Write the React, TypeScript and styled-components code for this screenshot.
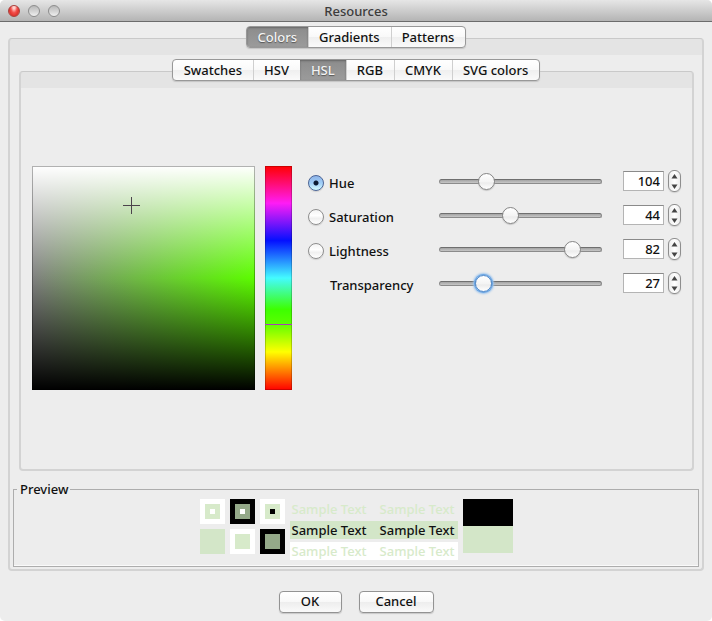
import React, { useState } from "react";
import styled, { createGlobalStyle, css } from "styled-components";

const GlobalStyle = createGlobalStyle`
  *, *::before, *::after { box-sizing: border-box; }
  body {
    margin: 0;
    background: #fff;
    color: #111;
    font: 500 13px/16px "Lucida Grande", "Noto Sans", "Open Sans", sans-serif;
  }
  button, input { font: inherit; color: inherit; margin: 0; }
`;

const Window = styled.div`
  background: #ededed;
  border-radius: 5px;
  overflow: hidden;
`;

const TitleBar = styled.header`
  display: grid;
  grid-template-columns: 1fr auto 1fr;
  align-items: center;
  height: 22px;
  padding: 0 8px;
  background: linear-gradient(#e6e6e6, #b4b4b4);
  border-bottom: 1px solid #6c6c6c;
`;

const Title = styled.h1`
  margin: 0;
  font-size: 13px;
  font-weight: 500;
  line-height: 20px;
  color: #3c3c3c;
`;

const WindowButtons = styled.div`
  display: flex;
  gap: 8px;
`;

const WindowButton = styled.button<{ $red?: boolean }>`
  width: 12px;
  height: 12px;
  padding: 0;
  border-radius: 50%;
  border: 1px solid ${(p) => (p.$red ? "#a8403c" : "#8c8c8c")};
  background: ${(p) =>
    p.$red
      ? "radial-gradient(ellipse at 50% 10%, #ffd0cc 0 15%, #f2504c 45%, #e0342f 70%, #ff8a80)"
      : "linear-gradient(#b8b8b8, #d8d8d8 60%, #f0f0f0)"};
`;

const Content = styled.main`
  padding: 4px 8px 8px;
`;

const TabList = styled.div`
  position: relative;
  z-index: 1;
  display: flex;
  width: max-content;
  height: 22px;
  margin: 0 auto -10px;
  border: 1px solid #989898;
  border-radius: 4px;
  background: linear-gradient(#fff, #f9f9f9 50%, #efefef 51%, #fafafa);
  box-shadow: 0 1px 1px #c4c4c4;
  overflow: hidden;
`;

const Tab = styled.button`
  display: flex;
  align-items: center;
  padding: 0 11px 1px;
  border: 0;
  background: none;

  & + & {
    box-shadow: inset 1px 0 #cfcfcf;
  }

  &[aria-selected="true"] {
    color: #f4f4f4;
    text-shadow: 0 1px 1px #555;
    background: linear-gradient(#8c8c8c, #9b9b9b);
    box-shadow: inset 0 1px 2px #666;
  }
`;

const Panel = styled.section`
  border: 2px solid #d3d3d3;
  border-top-color: #c9c9c9;
  border-top-width: 1px;
  border-radius: 4px;
  background: linear-gradient(#e4e4e4 0 16px, #ededed 16px);
`;

const OuterPanel = styled(Panel)`
  padding: 20px 3px 2px;
`;

const InnerPanel = styled(Panel)`
  margin: 0 5px 0 6px;
`;

const Picker = styled.div`
  display: flex;
  align-items: flex-start;
  padding: 94px 10px 79px 11px;
`;

const ColorField = styled.div`
  position: relative;
  flex: none;
  width: 223px;
  height: 224px;
  border: 1px solid rgba(0, 0, 0, 0.3);
  background: linear-gradient(#fff, rgba(255, 255, 255, 0) 50%, rgba(0, 0, 0, 0) 50%, #000),
    linear-gradient(90deg, #808080, #5cfc00);
  background-origin: border-box;
`;

const Crosshair = styled.svg`
  position: absolute;
  width: 17px;
  height: 17px;
  margin: -10px 0 0 -7px;
`;

const HueBar = styled.div`
  position: relative;
  flex: none;
  width: 27px;
  height: 224px;
  margin: 0 16px 0 10px;
  border: 1px solid rgba(0, 0, 0, 0.2);
  background: linear-gradient(
    #ff0000, #ff1cf5 16.6%, #0410ff 33.3%, #44fbff 50%,
    #3dff00 64%, #58ff00 70%, #ffff00 83%, #ff0000
  );
  background-origin: border-box;
`;

const HueMarker = styled.div`
  position: absolute;
  left: -1px;
  right: -1px;
  height: 1px;
  margin-top: -1px;
  background: #a83fb8;
`;

const Controls = styled.div`
  flex: 1;
  display: grid;
  gap: 4px;
`;

const ControlRow = styled.div`
  display: grid;
  grid-template-columns: 123px 1fr 41px 18px;
  align-items: center;
  height: 30px;
`;

const ChannelLabel = styled.label<{ $plain?: boolean }>`
  display: flex;
  align-items: center;
  gap: 5px;
  padding: 3px 0 0 ${(p) => (p.$plain ? 22 : 0)}px;
`;

const Radio = styled.input`
  appearance: none;
  width: 16px;
  height: 16px;
  border: 1px solid #8e8e8e;
  border-radius: 50%;
  background: linear-gradient(#f4f4f4, #fff 40%, #f0f0f0 60%, #fff);
  box-shadow: 0 1px 1px #d0d0d0;

  &:checked {
    border-color: #4b6496;
    background: radial-gradient(circle, #0b1a33 0 2px, transparent 3px),
      linear-gradient(#8fb4e8, #9fcdf7 50%, #d4fbff);
  }
`;

const SliderBox = styled.div`
  display: grid;
  align-items: center;
  margin-right: 13px;
`;

const SliderTrack = styled.div`
  grid-area: 1 / 1;
  height: 5px;
  margin: 0 8px;
  border: 1px solid #8b8b8b;
  border-top-color: #6f6f6f;
  border-radius: 3px;
  background: linear-gradient(#a4a4a4, #c6c6c6);
`;

const focusRing = css`
  border-color: #4c88cc;
  box-shadow: 0 0 0 1px #69a4e2, 0 0 2px 2px #9cc4ee;
`;

const SliderInput = styled.input<{ $active?: boolean }>`
  grid-area: 1 / 1;
  appearance: none;
  position: relative;
  width: 100%;
  min-width: 0;
  height: 20px;
  background: none;
  outline: none;

  &::-webkit-slider-thumb {
    appearance: none;
    width: 17px;
    height: 17px;
    border: 1px solid #858585;
    border-radius: 50%;
    background: linear-gradient(#fff, #f4f4f4 50%, #ececec 60%, #fff);
    box-shadow: 0 1px 1px #c4c4c4;
    ${(p) => p.$active && focusRing}
  }
`;

const NumberField = styled.input`
  width: 100%;
  height: 20px;
  padding: 0 3px;
  border: 1px solid #b4b4b4;
  border-top-color: #8a8a8a;
  border-radius: 0;
  background: #fff;
  text-align: right;
  outline: none;
`;

const Stepper = styled.div`
  display: grid;
  height: 22px;
  margin-left: 4px;
  width: 13px;
  border: 1px solid #8e8e8e;
  border-radius: 6px;
  background: linear-gradient(90deg, #ececec, #fff 50%, #ececec);
  box-shadow: 0 1px 1px #d0d0d0;
`;

const StepButton = styled.button`
  display: grid;
  place-items: center;
  min-height: 0;
  padding: 0;
  border: 0;
  background: none;
`;

const Preview = styled.fieldset`
  display: flex;
  justify-content: center;
  gap: 5px;
  min-width: 0;
  margin: 10px 0 0;
  padding: 2px 3px 6px;
  border: 1px solid #adadad;
  box-shadow: inset 0 -1px #fafafa;
`;

const PreviewLegend = styled.legend`
  padding: 0 2px 0 3px;
  line-height: 16px;
`;

const SwatchGrid = styled.div`
  display: grid;
  grid-template-columns: repeat(3, 25px);
  grid-auto-rows: 25px;
  gap: 5px;
`;

const Swatch = styled.div<{ $outer: string; $inner?: string }>`
  display: grid;
  place-items: center;
  background: ${(p) => p.$outer};

  &::before {
    content: "";
    grid-area: 1 / 1;
    width: 15px;
    height: 15px;
    background: ${(p) => p.$inner ?? "none"};
  }
`;

const SwatchCore = styled.div<{ $color: string }>`
  grid-area: 1 / 1;
  width: 5px;
  height: 5px;
  background: ${(p) => p.$color};
`;

const Samples = styled.div`
  display: grid;
  grid-template-rows: 18px 18px 18px;
  gap: 3px;
  min-width: 168px;
  padding-top: 1px;
`;

const Sample = styled.div<{ $text: string; $back?: string }>`
  display: flex;
  justify-content: space-between;
  gap: 8px;
  padding: 0 3px 0 2px;
  line-height: 18px;
  white-space: nowrap;
  color: ${(p) => p.$text};
  background: ${(p) => p.$back ?? "none"};
`;

const Compare = styled.div`
  display: grid;
  grid-template-rows: 27px 27px;
  width: 50px;
`;

const CompareHalf = styled.div<{ $color: string }>`
  background: ${(p) => p.$color};
`;

const Footer = styled.footer`
  display: flex;
  justify-content: center;
  gap: 17px;
  padding-top: 20px;
`;

const PushButton = styled.button<{ $width: number }>`
  min-width: ${(p) => p.$width}px;
  height: 22px;
  padding: 0 12px 2px;
  border: 1px solid #939393;
  border-radius: 4px;
  background: linear-gradient(#fff, #f8f8f8 50%, #ededed 51%, #fafafa);
  box-shadow: 0 1px 1px #c8c8c8;
`;

type Channel = "Hue" | "Saturation" | "Lightness" | "Transparency";

const limits: Record<Channel, number> = {
  Hue: 360,
  Saturation: 100,
  Lightness: 100,
  Transparency: 100,
};

const channels = Object.keys(limits) as Channel[];
const GREEN = "#d3e6c8";
const LIGHT_GREEN = "#d7eaca";
const MUTED_GREEN = "#94a989";

function Tabs({ names, initial, label }: { names: string[]; initial: string; label: string }) {
  const [selected, setSelected] = useState(initial);
  return (
    <TabList role="tablist" aria-label={label}>
      {names.map((name) => (
        <Tab key={name} role="tab" aria-selected={selected === name} onClick={() => setSelected(name)}>
          {name}
        </Tab>
      ))}
    </TabList>
  );
}

function Arrow({ down }: { down?: boolean }) {
  return (
    <svg width="7" height="5" viewBox="0 0 7 5" aria-hidden="true">
      <path d={down ? "M0.5 0.5H6.5L3.5 5Z" : "M0.5 4.5H6.5L3.5 0Z"} fill="#444" />
    </svg>
  );
}

export default function App() {
  const [values, setValues] = useState<Record<Channel, number>>({
    Hue: 104,
    Saturation: 44,
    Lightness: 82,
    Transparency: 27,
  });
  const [axis, setAxis] = useState<Channel>("Hue");
  const [active, setActive] = useState<Channel>("Transparency");

  const change = (channel: Channel, value: number) =>
    setValues((old) => ({
      ...old,
      [channel]: Math.max(0, Math.min(limits[channel], value || 0)),
    }));

  return (
    <>
      <GlobalStyle />
      <Window>
        <TitleBar>
          <WindowButtons>
            <WindowButton $red aria-label="Close" />
            <WindowButton aria-label="Minimize" />
            <WindowButton aria-label="Zoom" />
          </WindowButtons>
          <Title>Resources</Title>
        </TitleBar>
        <Content>
          <Tabs label="Resource type" names={["Colors", "Gradients", "Patterns"]} initial="Colors" />
          <OuterPanel>
            <Tabs
              label="Color model"
              names={["Swatches", "HSV", "HSL", "RGB", "CMYK", "SVG colors"]}
              initial="HSL"
            />
            <InnerPanel>
              <Picker>
                <ColorField>
                  <Crosshair
                    viewBox="0 0 17 17"
                    style={{ left: `${values.Saturation}%`, top: `${100 - values.Lightness}%` }}
                    aria-hidden="true"
                  >
                    <path d="M8.5 0V17M0 8.5H17" stroke="#4c434c" strokeWidth="1" />
                  </Crosshair>
                </ColorField>
                <HueBar>
                  <HueMarker style={{ top: `${100 - (values.Hue / 360) * 100}%` }} />
                </HueBar>
                <Controls>
                  {channels.map((channel) => {
                    const plain = channel === "Transparency";
                    const id = `channel-${channel}`;
                    return (
                      <ControlRow key={channel}>
                        <ChannelLabel $plain={plain} htmlFor={plain ? id : undefined}>
                          {!plain && (
                            <Radio
                              type="radio"
                              name="axis"
                              checked={axis === channel}
                              onChange={() => setAxis(channel)}
                            />
                          )}
                          {channel}
                        </ChannelLabel>
                        <SliderBox>
                          <SliderTrack />
                          <SliderInput
                            id={id}
                            type="range"
                            aria-label={channel}
                            min={0}
                            max={limits[channel]}
                            value={values[channel]}
                            $active={active === channel}
                            onFocus={() => setActive(channel)}
                            onChange={(e) => change(channel, Number(e.target.value))}
                          />
                        </SliderBox>
                        <NumberField
                          type="text"
                          inputMode="numeric"
                          aria-label={`${channel} value`}
                          value={values[channel]}
                          onChange={(e) => change(channel, Number(e.target.value))}
                        />
                        <Stepper>
                          <StepButton
                            aria-label={`Increase ${channel}`}
                            onClick={() => change(channel, values[channel] + 1)}
                          >
                            <Arrow />
                          </StepButton>
                          <StepButton
                            aria-label={`Decrease ${channel}`}
                            onClick={() => change(channel, values[channel] - 1)}
                          >
                            <Arrow down />
                          </StepButton>
                        </Stepper>
                      </ControlRow>
                    );
                  })}
                </Controls>
              </Picker>
            </InnerPanel>
            <Preview>
              <PreviewLegend>Preview</PreviewLegend>
              <SwatchGrid>
                <Swatch $outer="#fff" $inner={LIGHT_GREEN}>
                  <SwatchCore $color="#fff" />
                </Swatch>
                <Swatch $outer="#000" $inner={MUTED_GREEN}>
                  <SwatchCore $color="#fff" />
                </Swatch>
                <Swatch $outer="#fff" $inner={LIGHT_GREEN}>
                  <SwatchCore $color="#000" />
                </Swatch>
                <Swatch $outer={GREEN} />
                <Swatch $outer="#fff" $inner={LIGHT_GREEN} />
                <Swatch $outer="#000" $inner={MUTED_GREEN} />
              </SwatchGrid>
              <Samples>
                <Sample $text={LIGHT_GREEN}>
                  <span>Sample Text</span>
                  <span>Sample Text</span>
                </Sample>
                <Sample $text="#111" $back={GREEN}>
                  <span>Sample Text</span>
                  <span>Sample Text</span>
                </Sample>
                <Sample $text={LIGHT_GREEN} $back="#fff">
                  <span>Sample Text</span>
                  <span>Sample Text</span>
                </Sample>
              </Samples>
              <Compare>
                <CompareHalf $color="#000" />
                <CompareHalf $color={GREEN} />
              </Compare>
            </Preview>
          </OuterPanel>
          <Footer>
            <PushButton $width={63}>OK</PushButton>
            <PushButton $width={75}>Cancel</PushButton>
          </Footer>
        </Content>
      </Window>
    </>
  );
}
